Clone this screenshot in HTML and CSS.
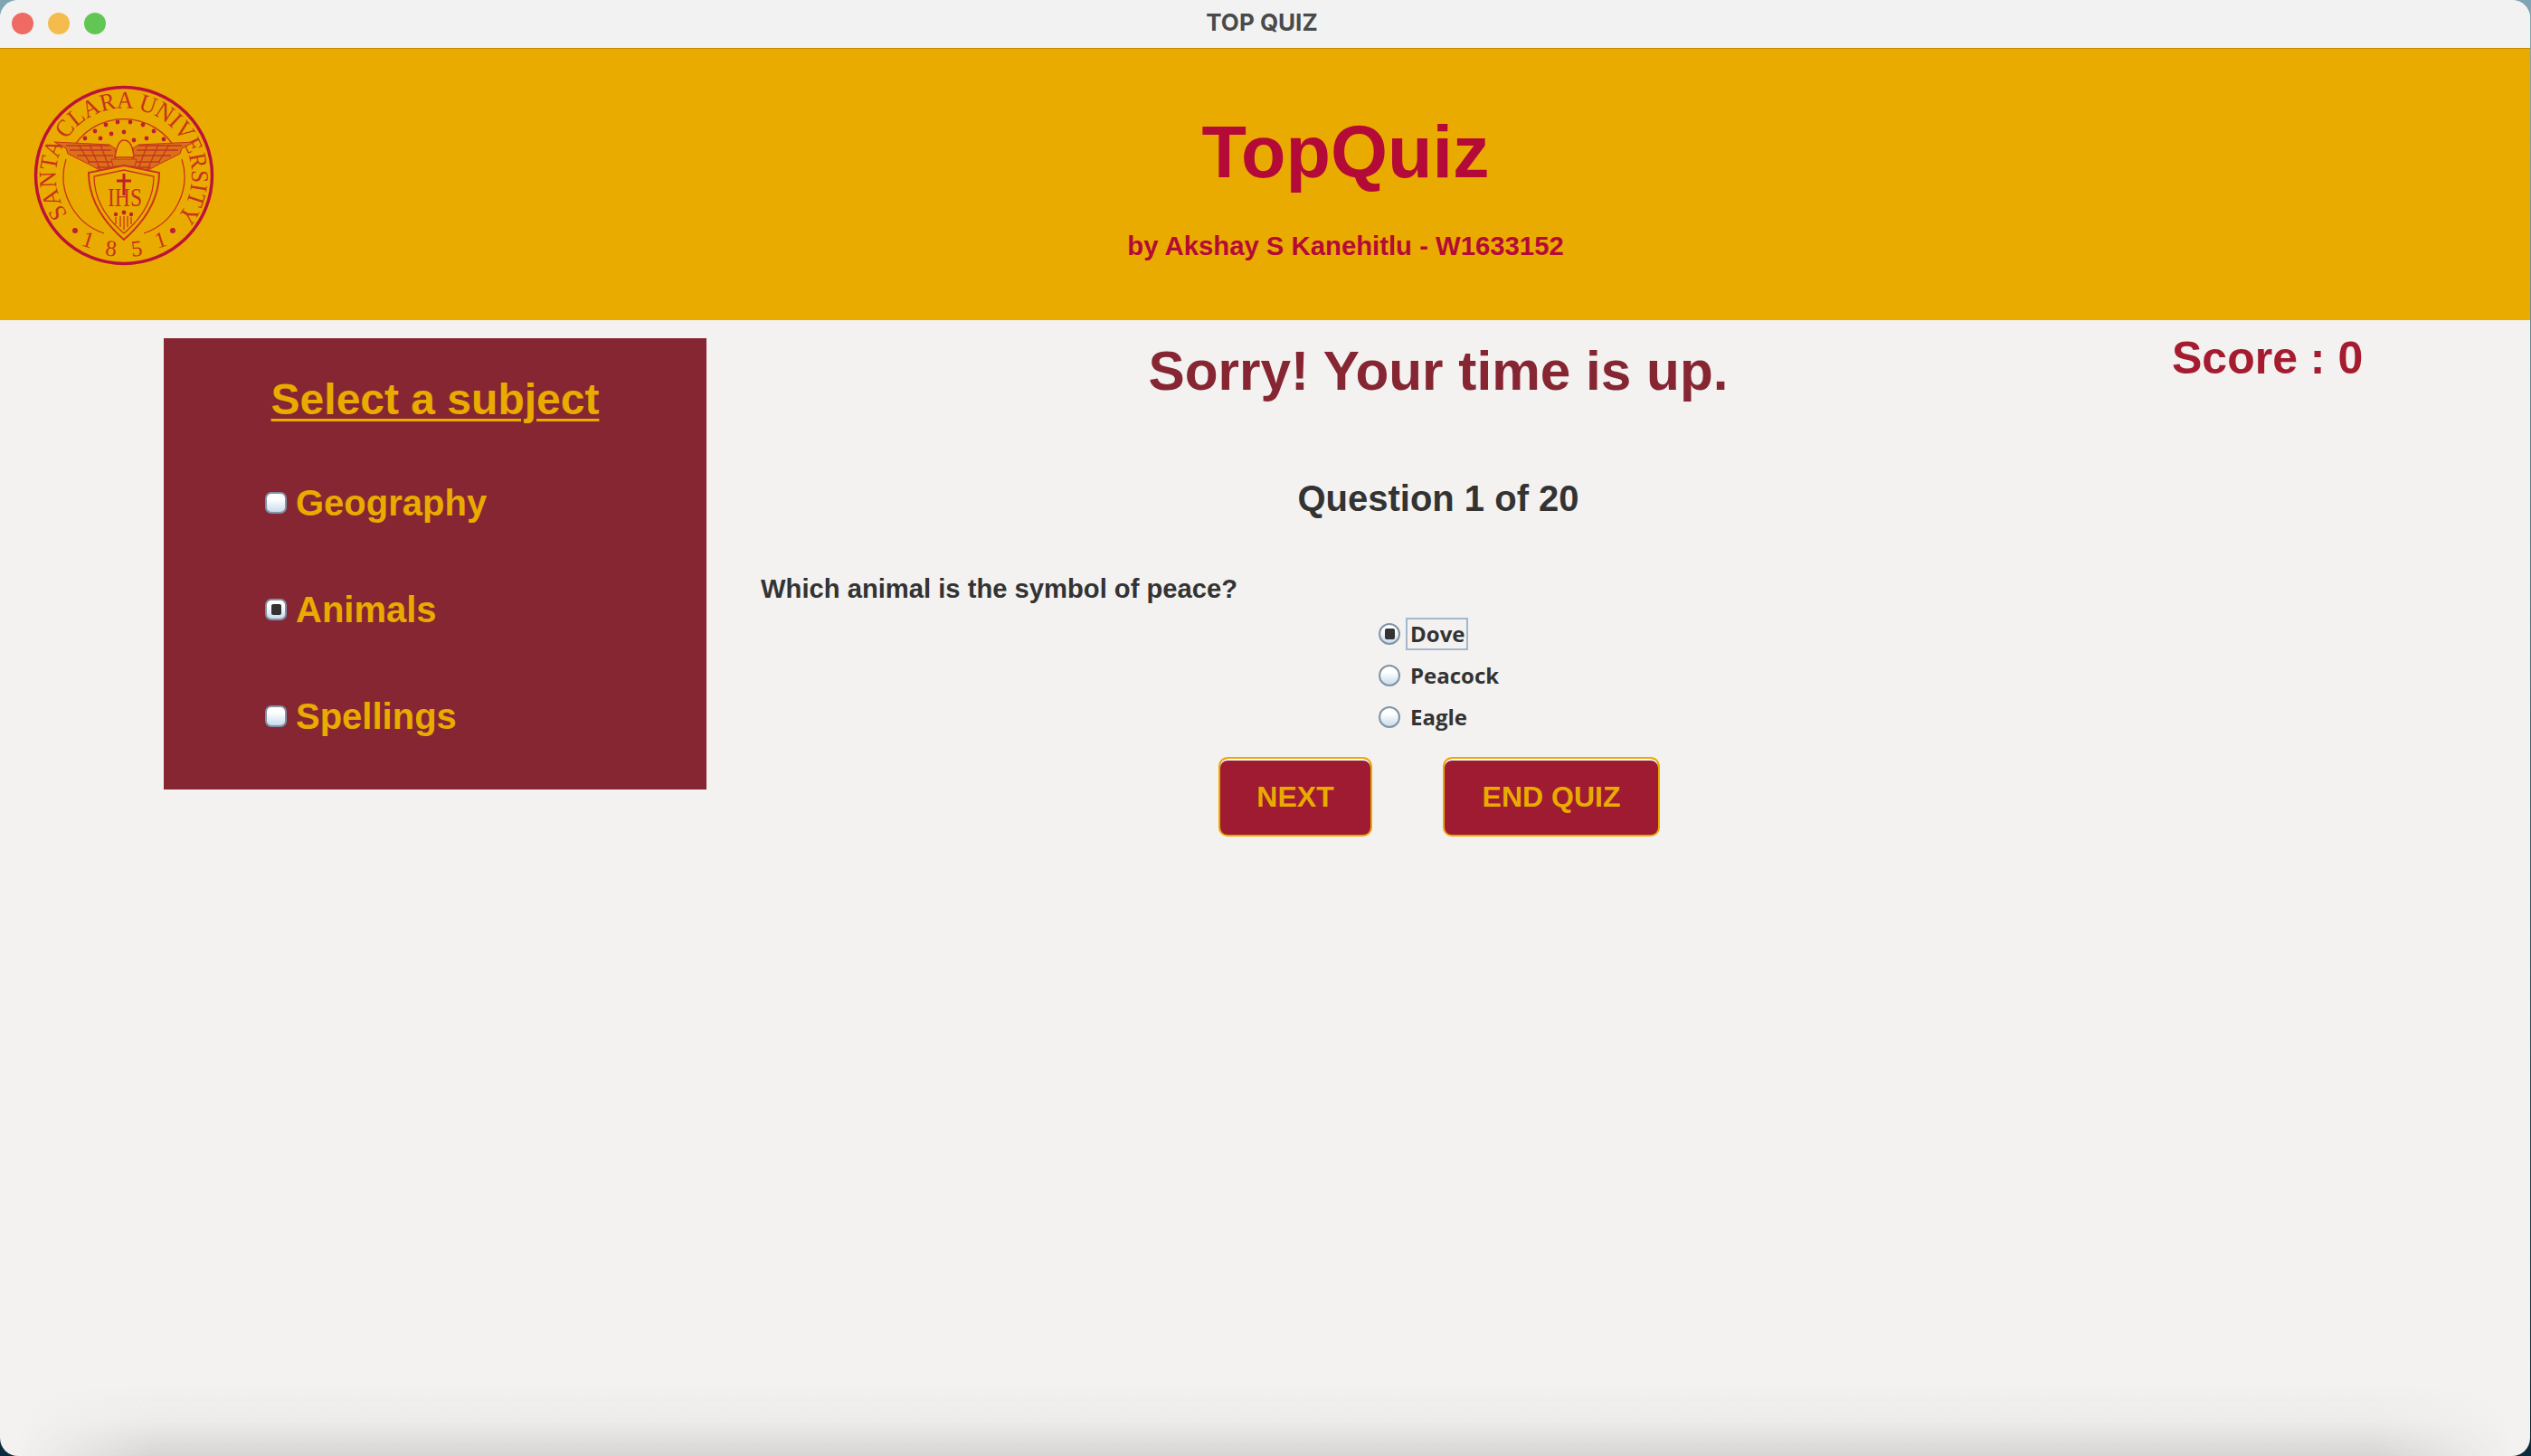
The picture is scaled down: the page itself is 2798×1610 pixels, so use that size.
FILE: index.html
```html
<!DOCTYPE html>
<html lang="en">
<head>
  <meta charset="UTF-8" />
  <title>TOP QUIZ</title>
  <link rel="stylesheet" href="styles.css">
</head>
<body>
  <div class="window">

    <!-- title bar -->
    <div class="titlebar">
      <div class="lights">
        <span class="light red"></span>
        <span class="light yellow"></span>
        <span class="light green"></span>
      </div>
      <div class="window-title">TOP QUIZ</div>
    </div>

    <!-- banner -->
    <header class="banner">
      <div class="logo-box">
        <svg class="seal" width="200" height="200" viewBox="0 0 200 200">
          <defs>
            <path id="sealArc" d="M38 143 A75 75 0 1 1 161 144" />
          </defs>
          <circle class="ring" cx="100" cy="100" r="97.5" />
          <path class="thin" d="M41 74 A66 66 0 0 1 159 74" />
          <path class="thin" d="M36 82 A66 66 0 0 0 78 164" />
          <path class="thin" d="M164 82 A66 66 0 0 1 122 164" />
          <text class="seal-letters" font-size="27" textLength="330" lengthAdjust="spacingAndGlyphs"><textPath href="#sealArc">SANTA CLARA UNIVERSITY</textPath></text>
          <text class="seal-letters" font-size="25" text-anchor="middle" transform="translate(58 179) rotate(18)">1</text>
          <text class="seal-letters" font-size="25" text-anchor="middle" transform="translate(85 189) rotate(6)">8</text>
          <text class="seal-letters" font-size="25" text-anchor="middle" transform="translate(115 189) rotate(-6)">5</text>
          <text class="seal-letters" font-size="25" text-anchor="middle" transform="translate(143 179) rotate(-18)">1</text>
          <g class="dots">
            <circle cx="46" cy="161" r="3" /><circle cx="154" cy="161" r="3" />
            <circle cx="80" cy="44" r="2.4" /><circle cx="93" cy="41" r="2.4" /><circle cx="107" cy="41" r="2.4" /><circle cx="121" cy="44" r="2.4" />
            <circle cx="68" cy="51" r="2.4" /><circle cx="86" cy="54" r="2.4" /><circle cx="100" cy="52" r="2.4" /><circle cx="133" cy="51" r="2.4" />
            <circle cx="57" cy="59" r="2.4" /><circle cx="74" cy="59" r="2.4" /><circle cx="111" cy="61" r="2.4" /><circle cx="125" cy="59" r="2.4" /><circle cx="144" cy="60" r="2.4" />
          </g>
          <!-- eagle -->
          <path class="wing" d="M23 63 L84 66 L90 70 L92 90 L80 98 L62 88 L38 76 L36 70 Z" />
          <path class="wing" d="M178 63 L116 66 L110 70 L108 90 L120 98 L138 88 L162 76 L164 70 Z" />
          <path class="thin" d="M36 67 H84 M40 72 H86 M48 78 H88 M60 85 H90 M70 91 H88 M164 67 H116 M160 72 H114 M152 78 H112 M140 85 H110 M130 91 H112" />
          <path class="thin" d="M50 66 L62 86 M62 66 L74 94 M74 66 L84 92 M150 66 L138 86 M138 66 L126 94 M126 66 L116 92" />
          <path class="head" d="M90 80 C92 66 96 61 100 61 C106 61 110 68 111 80 Z" />
          <path class="wing" d="M86 82 H114 L112 90 H88 Z" />
          <!-- shield -->
          <path class="shield" d="M61 97 L100 89 L139 97 C139 125 124 150 100 171 C76 150 61 125 61 97 Z" />
          <path class="thin" d="M67 101 L100 94 L133 101 C133 125 120 147 100 164 C80 147 67 125 67 101 Z" />
          <path class="cross" d="M100 98 V122 M92 106 H108" />
          <text class="seal-ihs" x="82" y="134" font-size="29" textLength="38" lengthAdjust="spacingAndGlyphs">IHS</text>
          <g class="dots">
            <circle cx="91" cy="143" r="2.2" /><circle cx="100" cy="141" r="2.4" /><circle cx="108" cy="143" r="2.2" />
          </g>
          <path class="thin" d="M91 146 V154 M96 145 V157 M100 145 V160 M104 145 V157 M108 146 V154" />
        </svg>
      </div>
      <div class="banner-text">
        <h1 class="app-name">TopQuiz</h1>
        <p class="byline">by Akshay S Kanehitlu - W1633152</p>
      </div>
    </header>

    <div class="main">
      <!-- subject list -->
      <aside class="subjects">
        <h2 class="subjects-title">Select a subject</h2>
        <label class="subject"><input class="subject-radio" type="radio" name="subject"> Geography</label>
        <label class="subject"><input class="subject-radio" type="radio" name="subject" checked> Animals</label>
        <label class="subject"><input class="subject-radio" type="radio" name="subject"> Spellings</label>
      </aside>

      <!-- quiz area -->
      <section class="quiz">
        <h2 class="message">Sorry! Your time is up.</h2>
        <h3 class="counter">Question 1 of 20</h3>
        <p class="question">Which animal is the symbol of peace?</p>
        <div class="answers">
          <label class="answer"><input class="answer-radio" type="radio" name="answer" checked><span class="answer-text focused">Dove</span></label>
          <label class="answer"><input class="answer-radio" type="radio" name="answer"><span class="answer-text">Peacock</span></label>
          <label class="answer"><input class="answer-radio" type="radio" name="answer"><span class="answer-text">Eagle</span></label>
        </div>
        <div class="buttons">
          <button class="quiz-btn next-btn">NEXT</button>
          <button class="quiz-btn end-btn">END QUIZ</button>
        </div>
      </section>

      <div class="score">Score : 0</div>
    </div>
  </div>
</body>
</html>
```
FILE: styles.css
```css
html, body {
  height: 100%;
}

body {
  margin: 0;
  font-family: "Liberation Sans", Arial, sans-serif;
  background: linear-gradient(180deg, #7fa5b3 0, #7fa5b3 40px, #0c2b3c 1570px);
  overflow: hidden;
}

.window {
  position: relative;
  height: 1610px;
  margin-right: 1px;
  display: flex;
  flex-direction: column;
  background-color: #f3f2f0;
  border-radius: 20px;
  overflow: hidden;
}

/* soft shadow along the bottom edge */
.window::after {
  content: "";
  position: absolute;
  left: 0;
  right: 0;
  bottom: 0;
  height: 80px;
  background: linear-gradient(180deg, rgba(205,204,202,0), rgba(205,204,202,0.14) 50%, rgba(205,204,202,0.75));
  -webkit-mask-image: linear-gradient(90deg, transparent 20px, #000 170px, #000 calc(100% - 170px), transparent calc(100% - 20px));
  mask-image: linear-gradient(90deg, transparent 20px, #000 170px, #000 calc(100% - 170px), transparent calc(100% - 20px));
}

/* title bar */
.titlebar {
  height: 53px;
  flex-shrink: 0;
  display: flex;
  align-items: center;
  background-color: #f2f2f2;
  border-bottom: 1px solid #c48a00;
  position: relative;
}

.lights {
  display: flex;
  gap: 16px;
  padding-left: 13px;
  position: absolute;
  top: 14px;
}

.light {
  width: 24px;
  height: 24px;
  border-radius: 50%;
}

.red { background-color: #ee6a63; }
.yellow { background-color: #f5bb4d; }
.green { background-color: #62c655; }

.window-title {
  flex-grow: 1;
  text-align: center;
  padding: 0 7px 4px 0;
  font-family: "Inter", sans-serif;
  font-weight: 700;
  font-size: 26px;
  color: #4a4a4a;
}

/* banner */
.banner {
  height: 300px;
  flex-shrink: 0;
  display: flex;
  background-color: #eaab00;
}

.logo-box {
  width: 178px;
  flex-shrink: 0;
}

.seal {
  display: block;
  margin: 40px 0 0 37px;
  overflow: visible;
}

.ring {
  fill: none;
  stroke: #bd1238;
  stroke-width: 3.5;
}

.thin {
  fill: none;
  stroke: #c9341f;
  stroke-width: 1.3;
}

.dots circle {
  fill: #c01f33;
}

.seal-letters, .seal-ihs {
  font-family: "Liberation Serif", serif;
  fill: #c8321f;
}

.wing {
  fill: #d9701a;
  stroke: #c9341f;
  stroke-width: 1;
}

.head {
  fill: #eaab00;
  stroke: #c9341f;
  stroke-width: 1.6;
}

.shield {
  fill: #eaab00;
  stroke: #c9341f;
  stroke-width: 2;
}

.cross {
  fill: none;
  stroke: #bd1f2e;
  stroke-width: 3;
}

.banner-text {
  flex-grow: 1;
  text-align: center;
  color: #b40a37;
  font-weight: bold;
}

.app-name {
  margin: 0;
  padding-top: 68px;
  font-size: 81px;
  line-height: 92px;
}

.byline {
  margin: 0;
  padding-top: 40px;
  font-size: 29.3px;
  line-height: 36px;
}

/* main area */
.main {
  flex-grow: 1;
  display: flex;
  align-items: flex-start;
  padding-left: 181px;
}

.subjects {
  width: 600px;
  height: 499px;
  margin-top: 20px;
  flex-shrink: 0;
  box-sizing: border-box;
  background-color: #862633;
  color: #eaab00;
  padding-top: 40px;
}

.subjects-title {
  margin: 0 0 27px 0;
  text-align: center;
  font-size: 48px;
  line-height: 56px;
  text-decoration: underline;
  text-decoration-thickness: 3px;
  text-underline-offset: 5px;
}

.subject {
  display: flex;
  align-items: center;
  gap: 10px;
  height: 118px;
  padding-left: 112px;
  font-weight: bold;
  font-size: 40px;
}

.subject-radio, .answer-radio {
  appearance: none;
  -webkit-appearance: none;
  flex-shrink: 0;
  margin: 0;
  width: 24px;
  height: 24px;
  box-sizing: border-box;
  border: 2px solid #7f93a5;
  background: linear-gradient(180deg, #ffffff 30%, #c8dbec);
  display: flex;
  align-items: center;
  justify-content: center;
}

.subject-radio {
  border-radius: 7px;
}

.answer-radio {
  border-radius: 50%;
}

.subject-radio:checked::after, .answer-radio:checked::after {
  content: "";
  width: 11px;
  height: 12px;
  border-radius: 2px;
  background-color: #333333;
}

.quiz {
  width: 1618px;
  flex-shrink: 0;
  color: #333333;
  font-weight: bold;
}

.message {
  margin: 0;
  padding-top: 20px;
  text-align: center;
  font-size: 60.3px;
  line-height: 72px;
  color: #862633;
}

.counter {
  margin: 0;
  padding-top: 82px;
  text-align: center;
  font-size: 40px;
  line-height: 46px;
}

.question {
  margin: 0;
  padding: 55px 0 0 60px;
  font-size: 29.2px;
  line-height: 44px;
}

.answers {
  padding: 5px 0 0 743px;
}

.answer {
  display: flex;
  align-items: center;
  gap: 6px;
  height: 46px;
}

.answer-text {
  font-family: "Open Sans", "Noto Sans", sans-serif;
  font-weight: 700;
  font-size: 24px;
  line-height: 32px;
  padding: 0 2px 0 3px;
  border: 2px solid transparent;
}

.answer-text.focused {
  border-color: #a3b8cc;
}

.buttons {
  display: flex;
  justify-content: center;
  gap: 78px;
  padding: 21px 0 0 2px;
}

.quiz-btn {
  height: 88px;
  box-sizing: border-box;
  border: 2px solid #eaab00;
  border-radius: 10px;
  box-shadow: inset 0 2px 0 #ffffff;
  background-color: #9e1b32;
  color: #eaab00;
  font-family: "Liberation Sans", Arial, sans-serif;
  font-weight: bold;
  font-size: 32px;
  padding: 0;
}

.next-btn { width: 170px; }
.end-btn { width: 240px; }

.score {
  padding: 14px 0 0 2px;
  font-weight: bold;
  font-size: 50px;
  line-height: 56px;
  color: #a51c30;
}
```
